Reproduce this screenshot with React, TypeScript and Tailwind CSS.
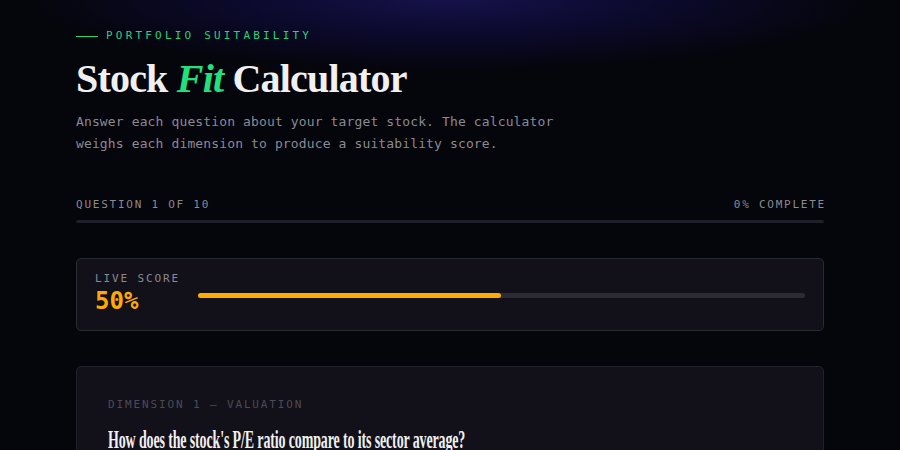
import React from "react";

const mono = "font-['DejaVu_Sans_Mono',monospace]";
const serif = "font-['Liberation_Serif',serif]";

export default function App() {
  return (
    <div className="min-h-[450px] w-full bg-[#05050c] bg-[radial-gradient(ellipse_420px_70px_at_50%_0%,#15124a_0%,#0c0a2e_45%,transparent_100%)]">
      <div className="mx-auto w-[748px] pt-[29px]">
        <div className={`flex items-center gap-2 ${mono} text-[11px] leading-[14px] tracking-[0.29em] text-[#22d47a]`}>
          <span className="h-px w-[22px] bg-[#22d47a]" />
          <span>PORTFOLIO SUITABILITY</span>
        </div>
        <h1 className={`${serif} mt-[12px] text-[40px] font-bold leading-[48px] tracking-[-0.02em] text-[#f0f0f0]`}>
          Stock <span className="italic text-[#22e07e]">Fit</span> Calculator
        </h1>
        <p className={`${mono} mt-[8px] w-[500px] text-[13px] leading-[22px] tracking-[0.01em] text-[#8a8a94]`}>
          Answer each question about your target stock. The calculator weighs each dimension to produce a suitability score.
        </p>
        <div className={`mt-[43px] flex justify-between ${mono} text-[11px] leading-[14px] tracking-[0.16em] text-[#8a8a94]`}>
          <span>QUESTION 1 OF 10</span>
          <span className="-mr-[2px]">0% COMPLETE</span>
        </div>
        <div className="mt-[8px] h-[3px] w-full rounded-full bg-[#1f1f29]" />
        <div className="mt-[35px] flex items-center gap-[18px] rounded-[5px] border border-[#2a2a33] bg-[#12111a] px-[18px] pt-[13px] pb-[15px]">
          <div className={`${mono} shrink-0`}>
            <div className="text-[11px] leading-[14px] tracking-[0.17em] text-[#8a8a94]">LIVE SCORE</div>
            <div className="mt-[1px] text-[24px] font-bold leading-[28px] text-[#ffaa00]">50%</div>
          </div>
          <div className="mt-[4px] h-[5px] flex-1 rounded-full bg-[#2b2a35]">
            <div className="h-full w-1/2 rounded-full bg-[#ffaa00]" />
          </div>
        </div>
        <div className="mt-[35px] rounded-[5px] border border-[#22222c] bg-[#12111a] px-[31px] pt-[31px] pb-[30px]">
          <div className={`${mono} text-[11px] leading-[14px] tracking-[0.17em] text-[#4b4a56]`}>
            DIMENSION 1 — VALUATION
          </div>
          <div className={`${serif} mt-[13px] origin-left scale-x-[0.56] whitespace-nowrap text-[25px] font-bold leading-[30px] tracking-[-0.01em] text-[#f0f0f0]`}>
            How does the stock's P/E ratio compare to its sector average?
          </div>
        </div>
      </div>
    </div>
  );
}
